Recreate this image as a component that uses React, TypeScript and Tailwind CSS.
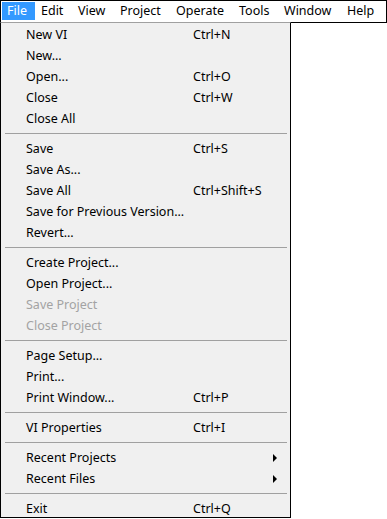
const menuBar = [
  { label: "File", w: "w-[33px]", active: true },
  { label: "Edit", w: "w-[37px]" },
  { label: "View", w: "w-[42px]" },
  { label: "Project", w: "w-[56px]" },
  { label: "Operate", w: "w-[63px]" },
  { label: "Tools", w: "w-[45px]" },
  { label: "Window", w: "w-[63px]" },
  { label: "Help", w: "w-[38px]" },
];

type Item =
  | { sep: true }
  | { label: string; shortcut?: string; disabled?: boolean; submenu?: boolean; sep?: false };

const items: Item[] = [
  { label: "New VI", shortcut: "Ctrl+N" },
  { label: "New..." },
  { label: "Open...", shortcut: "Ctrl+O" },
  { label: "Close", shortcut: "Ctrl+W" },
  { label: "Close All" },
  { sep: true },
  { label: "Save", shortcut: "Ctrl+S" },
  { label: "Save As..." },
  { label: "Save All", shortcut: "Ctrl+Shift+S" },
  { label: "Save for Previous Version..." },
  { label: "Revert..." },
  { sep: true },
  { label: "Create Project..." },
  { label: "Open Project..." },
  { label: "Save Project", disabled: true },
  { label: "Close Project", disabled: true },
  { sep: true },
  { label: "Page Setup..." },
  { label: "Print..." },
  { label: "Print Window...", shortcut: "Ctrl+P" },
  { sep: true },
  { label: "VI Properties", shortcut: "Ctrl+I" },
  { sep: true },
  { label: "Recent Projects", submenu: true },
  { label: "Recent Files", submenu: true },
  { sep: true },
  { label: "Exit", shortcut: "Ctrl+Q" },
];

function SubArrow() {
  return (
    <svg width="4" height="8" viewBox="0 0 4 8" className="absolute left-[272px] top-[7px]">
      <path d="M0 0 L4 4 L0 8 Z" fill="#000" />
    </svg>
  );
}

export default function App() {
  return (
    <div className="relative h-[519px] w-[387px] overflow-hidden bg-white font-['Noto_Sans',sans-serif] text-[12.5px] text-black">
      <div className="flex h-[23px] border border-black p-px">
        {menuBar.map((m) => (
          <div
            key={m.label}
            className={`flex h-[18px] items-center whitespace-nowrap pt-px ${m.w} ${
              m.active ? "bg-[#3399ff] pl-[5px] text-white" : "pl-[6px]"
            }`}
          >
            {m.label}
          </div>
        ))}
      </div>

      <div className="absolute left-0 top-[22px] h-[496px] w-[291px] border-x border-b border-t border-black border-t-[#a0a0a0] bg-[#f0f0f0] pt-px">
        {items.map((it, i) =>
          it.sep ? (
            <div key={i} className="flex h-[9px] items-center pl-[4px]">
              <div className="h-px w-[282px] bg-[#a0a0a0]" />
            </div>
          ) : (
            <div
              key={i}
              className={`relative flex h-[21px] items-center pl-[25px] pt-[2px] ${
                it.disabled ? "text-[#a3a3a3]" : ""
              }`}
            >
              <span className="w-[167px] shrink-0 whitespace-nowrap">{it.label}</span>
              {it.shortcut && <span className="whitespace-nowrap">{it.shortcut}</span>}
              {it.submenu && <SubArrow />}
            </div>
          )
        )}
      </div>
    </div>
  );
}
